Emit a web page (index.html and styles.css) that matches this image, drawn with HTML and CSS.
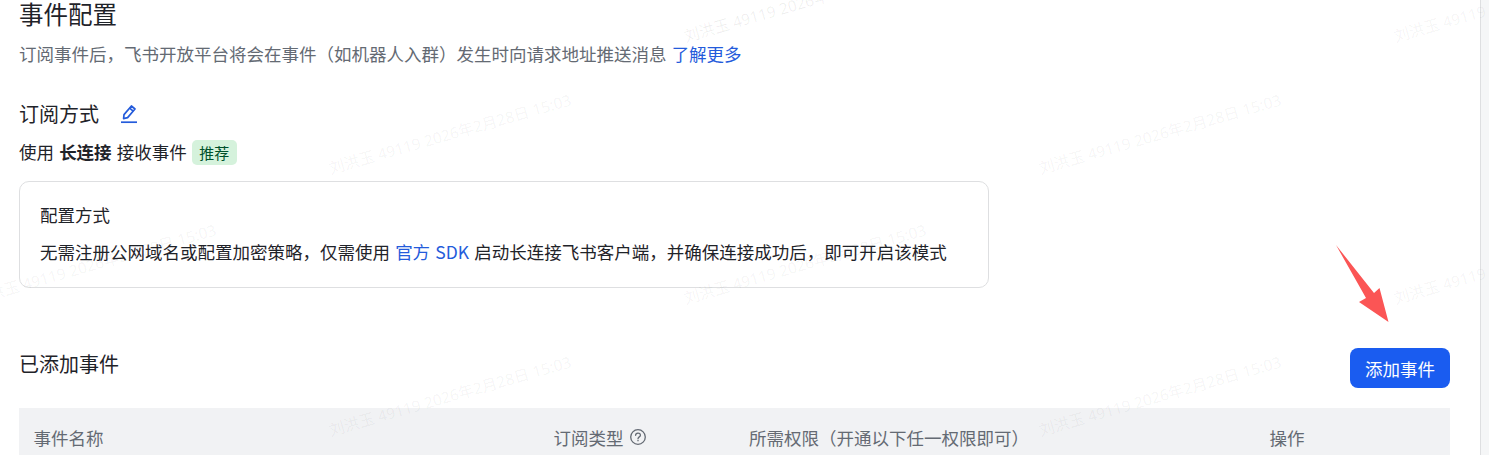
FILE: index.html
```html
<!DOCTYPE html>
<html lang="zh-CN">
<head>
    <meta charset="UTF-8">
    <title>事件配置</title>
    <link rel="stylesheet" href="styles.css">
</head>
<body>
    <div class="page">
        <main class="content">
            <h1 class="title">事件配置</h1>
            <p class="desc">订阅事件后，飞书开放平台将会在事件（如机器人入群）发生时向请求地址推送消息 <a class="link" href="#">了解更多</a></p>

            <div class="sub-head">
                <h2 class="sub-title">订阅方式</h2>
                <svg class="edit-icon" width="18" height="20" viewBox="0 0 18 20" fill="none" stroke="#245bdb" stroke-width="1.7">
                    <path d="M3.6 14.6 L4 10.6 L11.4 2 L15 5 L7.6 13.6 Z" stroke-linejoin="round"/>
                    <path d="M9.6 4.2 L13.2 7.2"/>
                    <path d="M1 18.2 H17"/>
                </svg>
            </div>
            <div class="mode">
                <span>使用 <b>长连接</b> 接收事件</span>
                <span class="tag">推荐</span>
            </div>

            <section class="card">
                <div class="card-title">配置方式</div>
                <div class="card-text">无需注册公网域名或配置加密策略，仅需使用 <a class="link" href="#">官方 SDK</a> 启动长连接飞书客户端，并确保连接成功后，即可开启该模式</div>
            </section>

            <div class="added-head">
                <h2 class="sub-title">已添加事件</h2>
                <button class="add-btn">添加事件</button>
            </div>

            <div class="table-head">
                <div class="col-name">事件名称</div>
                <div class="col-type">订阅类型
                    <svg width="16" height="16" viewBox="0 0 16 16" fill="none" stroke="#646a73" stroke-width="1.3">
                        <circle cx="8" cy="8" r="7.3"/>
                        <path d="M5.6 6.3 C5.6 3.3 10.4 3.3 10.4 6.2 C10.4 8 8 7.8 8 9.8" stroke-linecap="round"/>
                        <path d="M8 11 V12.2"/>
                    </svg>
                </div>
                <div class="col-perm">所需权限（开通以下任一权限即可）</div>
                <div class="col-action">操作</div>
            </div>
        </main>
        <div class="scroll-track"></div>
    </div>

    <svg class="arrow" width="60" height="84" viewBox="1334 242 60 84">
        <polygon fill="#fb5555" points="1336,245 1374,293 1379.5,288 1388.5,322 1359,302 1366,298"/>
    </svg>

    <div class="marks">
        <span class="mark m1">刘洪玉 49119 2026年2月28日 15:03</span>
        <span class="mark m2">刘洪玉 49119 2026年2月28日 15:03</span>
        <span class="mark m3">刘洪玉 49119 2026年2月28日 15:03</span>
        <span class="mark m4">刘洪玉 49119 2026年2月28日 15:03</span>
        <span class="mark m5">刘洪玉 49119 2026年2月28日 15:03</span>
        <span class="mark m6">刘洪玉 49119 2026年2月28日 15:03</span>
        <span class="mark m7">刘洪玉 49119 2026年2月28日 15:03</span>
        <span class="mark m8">刘洪玉 49119 2026年2月28日 15:03</span>
        <span class="mark m9">刘洪玉 49119 2026年2月28日 15:03</span>
    </div>
</body>
</html>
```

FILE: styles.css
```css
html, body {
    margin: 0;
    padding: 0;
    height: 455px;
    overflow: hidden;
    background-color: #fff;
}

body {
    font-family: "Noto Sans CJK SC", "Liberation Sans", sans-serif;
    font-size: 17.5px;
    word-spacing: 1.2px;
    color: #1f2329;
}

.page {
    display: flex;
    height: 455px;
}

.content {
    width: 1431px;
    padding-left: 19px;
    padding-right: 30px;
    flex: none;
}

.scroll-track {
    width: 8px;
    flex: none;
    border-left: 1px solid #dedfe1;
    background-color: #f5f6f7;
}

.title {
    margin: 0;
    font-size: 24.5px;
    line-height: 28px;
    font-weight: 400;
}

.desc {
    margin: 13px 0 0 0;
    font-size: 17.5px;
    line-height: 26px;
    color: #646a73;
}

.link {
    color: #245bdb;
    text-decoration: none;
}

.sub-head {
    display: flex;
    align-items: center;
    gap: 21px;
    margin-top: 33px;
}

.sub-title {
    margin: 0;
    font-size: 20px;
    line-height: 28px;
    font-weight: 400;
}

.mode {
    display: flex;
    align-items: center;
    gap: 5px;
    margin-top: 11px;
    line-height: 26px;
}

.tag {
    padding: 0 7.5px;
    font-size: 15px;
    line-height: 25px;
    border-radius: 5px;
    background-color: #d5f2dc;
    color: #00502a;
}

.card {
    margin-top: 16px;
    width: 970px;
    height: 107px;
    padding: 20px;
    box-sizing: border-box;
    border: 1px solid #dedfe1;
    border-radius: 10px;
}

.card-title {
    line-height: 28px;
    margin-top: -1px;
}

.card-text {
    margin-top: 9px;
    line-height: 28px;
}

.added-head {
    display: flex;
    justify-content: space-between;
    align-items: center;
    margin-top: 60px;
}

.added-head .sub-title {
    margin-top: -8px;
}

.add-btn {
    width: 100px;
    height: 40px;
    padding: 0;
    font-family: inherit;
    font-size: 17.5px;
    color: #fff;
    background-color: #1a5cf0;
    border: none;
    border-radius: 8px;
}

.table-head {
    display: flex;
    align-items: center;
    height: 58px;
    margin-top: 20px;
    padding-left: 14.5px;
    background-color: #f1f2f4;
    color: #646a73;
}

.col-name {
    width: 520px;
}

.col-type {
    display: flex;
    align-items: center;
    gap: 6px;
    width: 195.5px;
}

.col-perm {
    width: 520.5px;
}

/* watermark and arrow lie over the page */
.arrow {
    position: absolute;
    left: 1334px;
    top: 242px;
}

.marks {
    position: absolute;
    inset: 0;
    overflow: hidden;
    pointer-events: none;
}

.mark {
    position: absolute;
    font-family: "Noto Sans", "Noto Sans CJK SC", sans-serif;
    font-size: 15.5px;
    line-height: 20px;
    word-spacing: 0;
    white-space: nowrap;
    color: rgba(0, 0, 0, 0.05);
    transform: rotate(-16deg);
    transform-origin: left bottom;
}

.m1 { left: 332px; top: 158px; }
.m2 { left: 1042px; top: 158px; }
.m3 { left: -23px; top: 288px; }
.m4 { left: 687px; top: 288px; }
.m5 { left: 1397px; top: 288px; }
.m6 { left: 332px; top: 420px; }
.m7 { left: 1042px; top: 420px; }
.m8 { left: 687px; top: 26px; color: rgba(0, 0, 0, 0.065); }
.m9 { left: 1397px; top: 26px; }
```
